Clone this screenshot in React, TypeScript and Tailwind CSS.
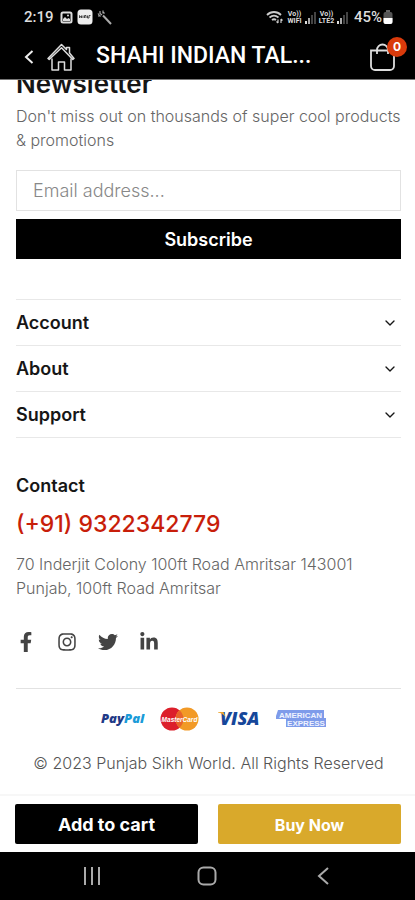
import React, { useState } from 'react';
import { ChevronDown } from 'lucide-react';
import { FaFacebookF, FaInstagram, FaLinkedinIn, FaTwitter } from 'react-icons/fa';

const footerMenus = [
  { title: 'Account', links: ['My account', 'Orders'] },
  { title: 'About', links: ['Our story', 'Stores'] },
  { title: 'Support', links: ['Shipping', 'Returns'] },
];

const SignalIcon: React.FC = () => (
  <svg width="13" height="13" viewBox="0 0 13 13" aria-hidden="true">
    <rect x="1" y="10" width="2" height="3" fill="#ddd" />
    <rect x="4" y="7" width="2" height="6" fill="#aaa" />
    <rect x="7" y="4" width="2" height="9" fill="#444" />
    <rect x="10" y="1" width="2" height="12" fill="#444" />
  </svg>
);

const VolteIcon: React.FC<{ label: string }> = ({ label }) => (
  <svg width="17" height="14" viewBox="0 0 17 14" fill="#ddd" fontFamily="Roboto, sans-serif" fontWeight="700">
    <text x="8.500" y="6" fontSize="7" textAnchor="middle">Vo))</text>
    <text x="8.500" y="13" fontSize="7" textAnchor="middle">{label}</text>
  </svg>
);

const StatusBar: React.FC = () => (
  <div className="flex h-[34px] items-center justify-between pl-6 pr-[22px] font-['Roboto',sans-serif] text-[#ddd]">
    <div className="flex items-center gap-1">
      <span className="mr-0.5 text-[15px] font-medium">2:19</span>
      <svg width="13" height="13" viewBox="0 0 13 13" aria-hidden="true">
        <rect x="1.5" y="1.5" width="10" height="10" rx="1.5" fill="none" stroke="#ddd" strokeWidth="2" />
        <path d="M3 10V8l2-2 2 2 1.500-1L10 8v2z" fill="#ddd" />
        <circle cx="8" cy="4.500" r="1" fill="#ddd" />
      </svg>
      <svg width="16" height="16" viewBox="0 0 16 16" aria-hidden="true">
        <rect x="0.500" y="0.500" width="15" height="15" rx="3.500" fill="#eee" />
        <path d="M2.500 9V6.500l2 2.500V6.500M6 6.500v2.500M7.500 9V6.500h1.500V9M10.500 6.500V9h1.500V6.500h1.500" stroke="#444" strokeWidth="1" fill="none" />
      </svg>
      <svg width="15" height="15" viewBox="0 0 15 15" fill="none" stroke="#aaa" aria-hidden="true">
        <path d="M6 5.500l8 8.500" strokeWidth="2" />
        <path d="M1 3.500l1.500 2M3 1v2.500l2 1.500M6 .500v3M1 6h3M5.500 1.500l2 2" strokeWidth="1.200" />
      </svg>
    </div>
    <div className="flex items-center gap-px">
      <svg className="mr-0.5" width="17" height="14" viewBox="0 0 17 14" fill="none" stroke="#ccc" strokeWidth="1.800" aria-hidden="true">
        <path d="M1 5c4-4 10-4 14 0M3.500 7.500c3-2.500 6-2.500 9 0M6 10c1.500-1.200 2.500-1.200 4 0" />
        <path d="M12 9.500V13M10.500 11.500L12 13M15 13V9M15 9l1.500 1.500" strokeWidth="1.200" />
      </svg>
      <VolteIcon label="WIFI" />
      <SignalIcon />
      <VolteIcon label="LTE2" />
      <SignalIcon />
      <span className="ml-1 text-[15px] font-medium">45%</span>
      <svg width="10" height="14" viewBox="0 0 10 14" aria-hidden="true">
        <rect x="3" y="0" width="4" height="2" fill="#666" />
        <rect x="0.500" y="2" width="9" height="12" rx="2" fill="#555" />
        <path d="M.500 8h9v4a2 2 0 0 1-2 2h-5a2 2 0 0 1-2-2z" fill="#fff" />
      </svg>
    </div>
  </div>
);

const Header: React.FC = () => (
  <header className="flex h-[45px] items-center px-5 pl-6 text-white">
    <button type="button" aria-label="Back" className="w-5">
      <svg width="10" height="14" viewBox="0 0 10 14" fill="none" stroke="#eee" strokeWidth="2">
        <path d="M8.500 1L2 7l6.500 6" />
      </svg>
    </button>
    <a href="#home" aria-label="Home" className="ml-[3px]">
      <svg width="28" height="28" viewBox="0 0 28 28" fill="none" stroke="#ddd" strokeWidth="1.500" strokeLinejoin="round">
        <path d="M5 15.500v11.500h6.500v-8h6v8H24V15.500" />
        <path d="M1 15.500L14.500 1.500l5 5V4.500h3v5.500l4.500 5.500-1.200 1L14.500 4.800 2.200 16.500z" />
      </svg>
    </a>
    <h1 className="ml-[21px] whitespace-nowrap font-['Roboto',sans-serif] text-[23px] font-medium">
      SHAHI INDIAN TAL...
    </h1>
    <button type="button" aria-label="Cart" className="relative ml-auto">
      <svg width="25" height="28" viewBox="0 0 25 28" fill="none" stroke="#ddd" strokeWidth="1.800">
        <path d="M1 7.500h23V23a4 4 0 0 1-4 4H5a4 4 0 0 1-4-4z" />
        <path d="M7 11V7a5.500 5.500 0 0 1 11 0v4" />
      </svg>
      <span className="absolute -right-3 -top-1.5 flex size-5 items-center justify-center rounded-full bg-[#d93a0b] text-xs font-bold">
        0
      </span>
    </button>
  </header>
);

const Newsletter: React.FC = () => {
  const [email, setEmail] = useState('');

  return (
    <section className="-mt-3">
      <h2 className="text-[26px] font-semibold leading-8">Newsletter</h2>
      <p className="mt-1 text-base font-light leading-6 text-[#666]">
        Don't miss out on thousands of super cool products &amp; promotions
      </p>
      <form className="mt-[18px]" onSubmit={(e) => e.preventDefault()}>
        <input
          type="email"
          aria-label="Email address"
          placeholder="Email address..."
          value={email}
          onChange={(e) => setEmail(e.target.value)}
          className="h-[41px] w-full border border-[#e2e2e2] px-4 text-lg font-light placeholder:text-[#888]"
        />
        <button type="submit" className="mt-2 block h-10 w-full bg-black pt-0.5 text-lg font-semibold text-white">
          Subscribe
        </button>
      </form>
    </section>
  );
};

const FooterMenus: React.FC = () => {
  const [open, setOpen] = useState<string | null>(null);

  return (
    <div className="mt-10 border-t border-[#e8e8e8]">
      {footerMenus.map((menu) => (
        <div key={menu.title} className="border-b border-[#e8e8e8]">
          <button
            type="button"
            aria-expanded={open === menu.title}
            onClick={() => setOpen(open === menu.title ? null : menu.title)}
            className="flex h-[45px] w-full items-center justify-between pr-[3px] text-lg font-semibold"
          >
            {menu.title}
            <ChevronDown className="size-4" strokeWidth={2} />
          </button>
          {open === menu.title && (
            <ul className="pb-3 text-[#777]">
              {menu.links.map((link) => (
                <li key={link}><a href="#link">{link}</a></li>
              ))}
            </ul>
          )}
        </div>
      ))}
    </div>
  );
};

const PaymentLogos: React.FC = () => (
  <div className="mt-[18px] flex items-center justify-center gap-[15px] pl-2.5">
    <svg width="44" height="24" viewBox="0 0 44 24" role="img" aria-label="PayPal" fontFamily="'Open Sans', sans-serif" fontSize="13" fontWeight="800" fontStyle="italic">
      <text x="0" y="16"><tspan fill="#1f3a87">Pay</tspan><tspan fill="#1a9bd8">Pal</tspan></text>
    </svg>
    <svg width="39" height="24" viewBox="0 0 39 24" role="img" aria-label="MasterCard">
      <circle cx="12" cy="12" r="11.500" fill="#dc1f2b" />
      <circle cx="27" cy="12" r="11.500" fill="#f29a26" />
      <path d="M19.500 3.300a11.500 11.500 0 0 1 0 17.400 11.500 11.500 0 0 1 0-17.400z" fill="#e8642a" />
      <text x="19.500" y="14.500" fontSize="6.500" fontWeight="700" fontStyle="italic" fontFamily="'Liberation Sans', sans-serif" textAnchor="middle" fill="#fff">MasterCard</text>
    </svg>
    <svg className="ml-1" width="42" height="24" viewBox="0 0 42 24" role="img" aria-label="Visa">
      <text x="2" y="18" fontSize="18" fontWeight="800" fontStyle="italic" fontFamily="'Open Sans', sans-serif" fill="#16479a">VISA</text>
      <path d="M0 5h5.500l2 5C5.500 7.500 3 6 0 5.500z" fill="#eda62f" />
    </svg>
    <svg width="52" height="24" viewBox="0 0 52 24" role="img" aria-label="American Express" fontFamily="'Liberation Sans', sans-serif" fontWeight="700">
      <path d="M3 3h46v8h2v9H11v-8H1V9z" fill="#7e9bea" />
      <text x="25.500" y="10.500" textAnchor="middle" fontSize="8" fill="#eef2ff">AMERICAN</text>
      <text x="31" y="19" textAnchor="middle" fontSize="8" fill="#eef2ff">EXPRESS</text>
    </svg>
  </div>
);

const ActionBar: React.FC = () => (
  <div className="grid grid-cols-2 gap-5 border-t-2 border-[#f7f7f7] pb-2 pl-[15px] pr-[14px] pt-2 font-bold text-white">
    <button type="button" className="h-10 rounded-xs bg-black pt-0.5 text-lg">Add to cart</button>
    <button type="button" className="h-10 rounded-xs bg-[#d9a92b] pt-0.5 text-base">Buy Now</button>
  </div>
);

const SystemNav: React.FC = () => (
  <nav className="grid h-12 grid-cols-3 place-items-center bg-black px-[34px] text-[#aaa]">
    <button type="button" aria-label="Recent apps">
      <svg width="18" height="18" viewBox="0 0 18 18" stroke="currentColor" strokeWidth="2">
        <path d="M2 0v18M9 0v18M16 0v18" />
      </svg>
    </button>
    <button type="button" aria-label="Home screen">
      <svg width="20" height="20" viewBox="0 0 20 20" fill="none" stroke="currentColor" strokeWidth="2">
        <rect x="1.500" y="1.500" width="17" height="17" rx="5" />
      </svg>
    </button>
    <button type="button" aria-label="Go back">
      <svg width="12" height="18" viewBox="0 0 12 18" fill="none" stroke="currentColor" strokeWidth="2">
        <path d="M11 1L2 9l9 8" />
      </svg>
    </button>
  </nav>
);

export default function App() {
  return (
    <div className="flex min-h-screen flex-col bg-white font-['Inter',sans-serif] text-[#161616]">
      <div className="z-10 border-b border-[#777] bg-black">
        <StatusBar />
        <Header />
      </div>
      <main className="flex-1 pl-4 pr-[14px]">
        <Newsletter />
        <FooterMenus />
        <section className="mt-9">
          <h2 className="text-lg font-semibold leading-6">Contact</h2>
          <a href="tel:+919322342779" className="mt-2.5 block text-[23px] font-medium leading-8 text-[#c81e0a]">
            (+91) 9322342779
          </a>
          <address className="mt-3 text-base font-light not-italic leading-6 text-[#666]">
            70 Inderjit Colony 100ft Road Amritsar 143001
            <br />
            Punjab, 100ft Road Amritsar
          </address>
          <div className="mt-8 flex gap-[21px] text-[#444]">
            <a href="#facebook" aria-label="Facebook"><FaFacebookF className="size-5" /></a>
            <a href="#instagram" aria-label="Instagram"><FaInstagram className="size-5" /></a>
            <a href="#twitter" aria-label="Twitter"><FaTwitter className="size-5" /></a>
            <a href="#linkedin" aria-label="LinkedIn"><FaLinkedinIn className="size-5" /></a>
          </div>
        </section>
        <div className="mt-9 border-t border-[#e2e2e2]">
          <PaymentLogos />
          <p className="mt-5 text-center text-base font-light leading-6 text-[#555]">
            © 2023 Punjab Sikh World. All Rights Reserved
          </p>
        </div>
      </main>
      <ActionBar />
      <SystemNav />
    </div>
  );
}
